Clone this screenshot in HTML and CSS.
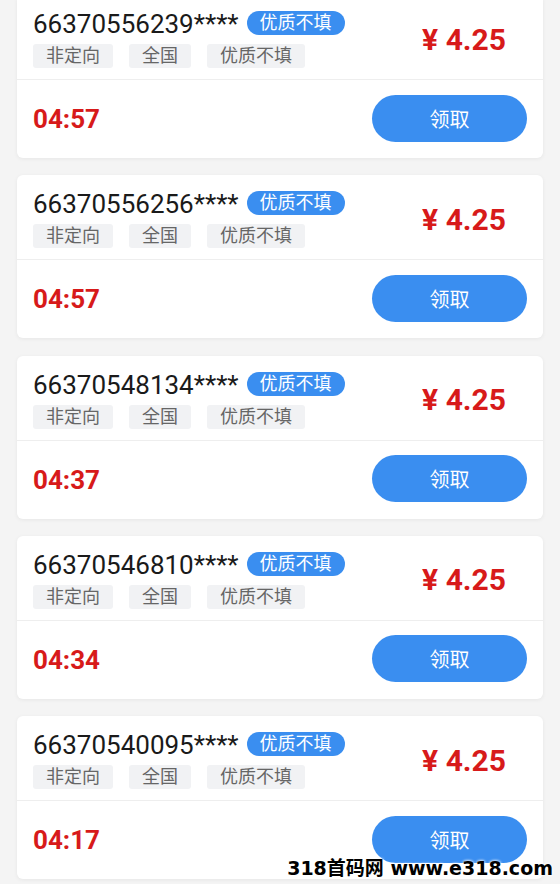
FILE: index.html
```html
<!DOCTYPE html>
<html lang="zh-CN">
<head>
  <meta charset="UTF-8">
  <meta name="viewport" content="width=device-width, initial-scale=1.0">
  <title>订单列表</title>
  <link rel="stylesheet" href="styles.css">
</head>
<body>
  <div class="list">
    <div class="card">
      <div class="card-top">
        <div class="info">
          <div class="title">
            <span class="num">66370556239****</span>
            <span class="badge">优质不填</span>
          </div>
          <div class="tags">
            <span class="tag">非定向</span>
            <span class="tag">全国</span>
            <span class="tag">优质不填</span>
          </div>
        </div>
        <div class="price">¥ 4.25</div>
      </div>
      <div class="card-bottom">
        <span class="time">04:57</span>
        <button class="btn">领取</button>
      </div>
    </div>

    <div class="card">
      <div class="card-top">
        <div class="info">
          <div class="title">
            <span class="num">66370556256****</span>
            <span class="badge">优质不填</span>
          </div>
          <div class="tags">
            <span class="tag">非定向</span>
            <span class="tag">全国</span>
            <span class="tag">优质不填</span>
          </div>
        </div>
        <div class="price">¥ 4.25</div>
      </div>
      <div class="card-bottom">
        <span class="time">04:57</span>
        <button class="btn">领取</button>
      </div>
    </div>

    <div class="card">
      <div class="card-top">
        <div class="info">
          <div class="title">
            <span class="num">66370548134****</span>
            <span class="badge">优质不填</span>
          </div>
          <div class="tags">
            <span class="tag">非定向</span>
            <span class="tag">全国</span>
            <span class="tag">优质不填</span>
          </div>
        </div>
        <div class="price">¥ 4.25</div>
      </div>
      <div class="card-bottom">
        <span class="time">04:37</span>
        <button class="btn">领取</button>
      </div>
    </div>

    <div class="card">
      <div class="card-top">
        <div class="info">
          <div class="title">
            <span class="num">66370546810****</span>
            <span class="badge">优质不填</span>
          </div>
          <div class="tags">
            <span class="tag">非定向</span>
            <span class="tag">全国</span>
            <span class="tag">优质不填</span>
          </div>
        </div>
        <div class="price">¥ 4.25</div>
      </div>
      <div class="card-bottom">
        <span class="time">04:34</span>
        <button class="btn">领取</button>
      </div>
    </div>

    <div class="card">
      <div class="card-top">
        <div class="info">
          <div class="title">
            <span class="num">66370540095****</span>
            <span class="badge">优质不填</span>
          </div>
          <div class="tags">
            <span class="tag">非定向</span>
            <span class="tag">全国</span>
            <span class="tag">优质不填</span>
          </div>
        </div>
        <div class="price">¥ 4.25</div>
      </div>
      <div class="card-bottom">
        <span class="time">04:17</span>
        <button class="btn">领取</button>
      </div>
    </div>
  </div>

  <div class="watermark">318首码网 www.e318.com</div>
</body>
</html>
```

FILE: styles.css
```css
/* Page */
body {
  margin: 0;
  padding: 0;
  background: #f4f4f4;
  font-family: Roboto, "Noto Sans CJK SC", sans-serif;
  color: #222;
  overflow: hidden;
  height: 884px;
  position: relative;
}
.list {
  display: flex;
  flex-direction: column;
  gap: 17.25px;
  margin-top: -5px;
  padding: 0 17px;
}

/* Card */
.card {
  background: #fff;
  border-radius: 6px;
  box-shadow: 0 1px 4px rgba(0, 0, 0, 0.06);
  height: 163px;
  display: flex;
  flex-direction: column;
}
.card-top {
  height: 84px;
  display: flex;
  align-items: center;
  justify-content: space-between;
  padding: 0 37px 0 16px;
  border-bottom: 1px solid #eeeeee;
}
.info {
  display: flex;
  flex-direction: column;
  gap: 7px;
  padding-top: 5px;
}
.title {
  display: flex;
  align-items: center;
  gap: 8px;
  height: 26px;
}
.num {
  font-size: 26px;
  line-height: 26px;
  color: #1a1a1a;
}
.badge {
  background: #3a8ef0;
  color: #fff;
  font-size: 18px;
  line-height: 24px;
  height: 24px;
  padding: 0 13px;
  border-radius: 12px;
  margin-top: -2px;
}
.tags {
  display: flex;
  gap: 16px;
}
.tag {
  background: #f1f2f4;
  color: #666;
  font-size: 18px;
  line-height: 24px;
  padding: 0 13px;
  border-radius: 3px;
}
.price {
  color: #d71a1a;
  font-size: 30px;
  font-weight: bold;
  margin-top: 4px;
}

/* Bottom row */
.card-bottom {
  flex: 1;
  display: flex;
  align-items: center;
  justify-content: space-between;
  padding: 0 16px;
}
.time {
  color: #d71a1a;
  font-size: 26px;
  font-weight: bold;
}
.btn {
  width: 155px;
  height: 47px;
  border: none;
  border-radius: 24px;
  background: #3a8ef0;
  color: #fff;
  font-size: 20px;
  font-family: "Noto Sans CJK SC", sans-serif;
  cursor: pointer;
  margin-top: -2px;
}

.watermark {
  position: absolute;
  right: 7px;
  bottom: 4px;
  font-family: "DejaVu Sans", "Noto Sans CJK SC", sans-serif;
  font-weight: bold;
  font-size: 19px;
  color: #000;
  text-shadow: 0 0 3px #fff, 0 0 3px #fff;
}
```
